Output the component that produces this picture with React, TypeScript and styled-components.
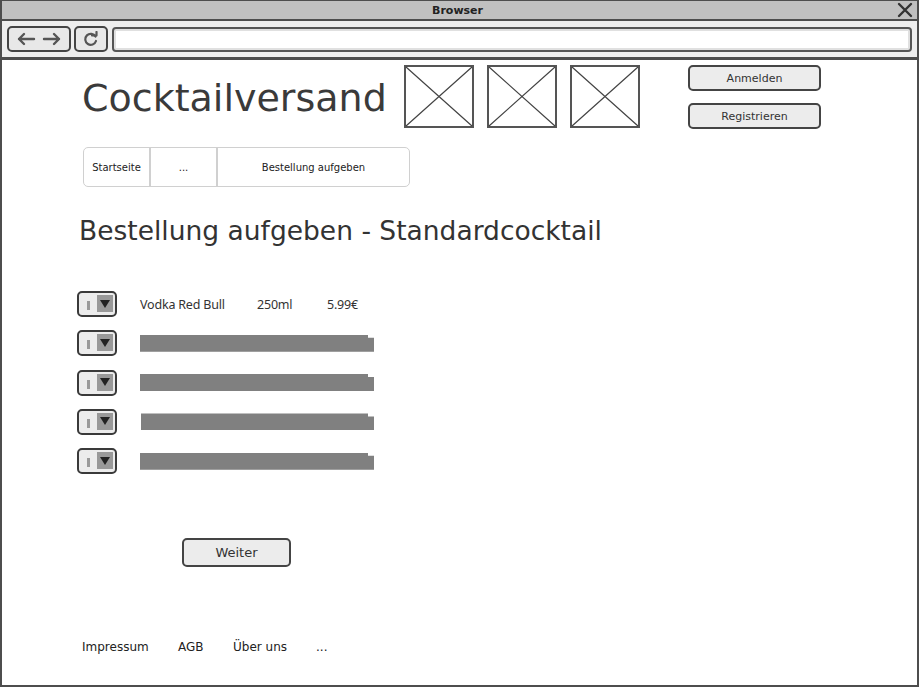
import React from "react";
import styled, { createGlobalStyle } from "styled-components";

const GlobalStyle = createGlobalStyle`
  html, body { margin: 0; padding: 0; background: #fff; }
  body { font-family: "DejaVu Sans", "Noto Sans", sans-serif; color: #333; }
  * { box-sizing: border-box; }
`;

const Window = styled.div`
  width: 919px;
  height: 687px;
  border: 2px solid #4d4d4d;
  border-top-width: 1px;
  display: flex;
  flex-direction: column;
  overflow: hidden;
  background: #fff;
`;

const TitleBar = styled.div`
  height: 20px;
  background: #c0c0c0;
  border-bottom: 2px solid #4d4d4d;
  display: grid;
  grid-template-columns: 1fr auto 1fr;
  align-items: center;
  padding-right: 4px;
`;

const TitleText = styled.div`
  grid-column: 2;
  font-family: "DejaVu Sans", sans-serif;
  font-weight: bold;
  font-size: 11px;
  color: #222;
`;

const CloseBox = styled.div`
  grid-column: 3;
  justify-self: end;
  display: flex;
  align-items: center;
`;

const Toolbar = styled.div`
  height: 39px;
  background: #eeeeee;
  border-bottom: 3px solid #4d4d4d;
  display: flex;
  align-items: center;
  gap: 3px;
  padding: 0 5px 0 5px;
`;

const ToolButton = styled.div<{ $w: number }>`
  width: ${(p) => p.$w}px;
  height: 26px;
  border: 2px solid #444;
  border-radius: 5px;
  background: #e8e8e8;
  display: flex;
  align-items: center;
  justify-content: space-evenly;
  color: #555;
`;

const UrlBar = styled.div`
  flex: 1;
  height: 25px;
  border: 2px solid #555;
  border-radius: 4px;
  background: #fff;
  box-shadow: inset 0 0 0 2px #e0e0e0;
  margin-left: 1px;
`;

const Content = styled.div`
  flex: 1;
  display: flex;
  flex-direction: column;
  padding-top: 4px;
`;

const HeaderRow = styled.div`
  display: flex;
  align-items: flex-start;
  padding-left: 80px;
`;

const SiteTitle = styled.div`
  width: 322px;
  height: 64px;
  padding-top: 4px;
  display: flex;
  align-items: center;
  font-family: "DejaVu Sans", sans-serif;
  font-size: 38px;
  color: #3a3a3a;
`;

const Images = styled.div`
  display: flex;
  gap: 13px;
  margin-top: 1px;
`;

const Placeholder = styled.svg`
  width: 70px;
  height: 63px;
  display: block;
`;

const AuthCol = styled.div`
  display: flex;
  flex-direction: column;
  gap: 12px;
  margin-left: 48px;
  margin-top: 1px;
`;

const SketchButton = styled.div<{ $w: number; $h: number; $fs: number }>`
  width: ${(p) => p.$w}px;
  height: ${(p) => p.$h}px;
  border: 2px solid #444;
  border-radius: 5px;
  background: #ececec;
  display: flex;
  align-items: center;
  justify-content: center;
  font-family: "DejaVu Sans", sans-serif;
  font-size: ${(p) => p.$fs}px;
  color: #333;
`;

const Tabs = styled.div`
  margin: 18px 0 0 81px;
  width: 327px;
  height: 40px;
  border: 1.5px solid #d0d0d0;
  border-radius: 5px;
  display: grid;
  grid-template-columns: 67px 67px 1fr;
`;

const Tab = styled.div<{ $last?: boolean }>`
  display: flex;
  align-items: center;
  justify-content: center;
  font-family: "DejaVu Sans", sans-serif;
  font-size: 10px;
  color: #222;
  border-right: ${(p) => (p.$last ? "none" : "2px solid #d0d0d0")};
`;

const Heading = styled.h1`
  margin: 25px 0 0 77px;
  font-family: "DejaVu Sans", sans-serif;
  font-weight: normal;
  font-size: 26.5px;
  line-height: 38px;
  color: #333;
`;

const List = styled.div`
  margin: 41px 0 0 75px;
  display: flex;
  flex-direction: column;
  gap: 13.3px;
`;

const Row = styled.div`
  display: flex;
  align-items: center;
  height: 26px;
`;

const Dropdown = styled.div`
  width: 40px;
  height: 26px;
  border: 2px solid #3a3a3a;
  border-radius: 5px;
  background: #ececec;
  display: flex;
  align-items: stretch;
  padding: 2px 2px 3px 3px;
`;

const DropLeft = styled.div`
  flex: 1;
  display: flex;
  align-items: flex-end;
  padding: 0 0 2px 5px;
`;

const Caret = styled.div`
  width: 3px;
  height: 9px;
  background: #9a9a9a;
`;

const DropRight = styled.div`
  width: 16px;
  background: #999;
  display: flex;
  align-items: center;
  justify-content: center;
`;

const Triangle = styled.div`
  width: 0;
  height: 0;
  border-left: 5px solid transparent;
  border-right: 5px solid transparent;
  border-top: 8px solid #222;
`;

const Cell = styled.span<{ $w: number }>`
  width: ${(p) => p.$w}px;
  font-family: "Noto Sans", sans-serif;
  font-size: 12.5px;
  color: #333;
  letter-spacing: -0.2px;
`;

const Cells = styled.div`
  display: flex;
  margin-left: 23px;
`;

const Bar = styled.div<{ $offset: number }>`
  margin-left: ${(p) => 23 + p.$offset}px;
  width: ${(p) => 234 - p.$offset}px;
  height: 17px;
  background: #808080;
  clip-path: polygon(0 0, calc(100% - 6px) 0, calc(100% - 6px) 3px, 100% 3px, 100% 100%, 0 100%);
`;

const WeiterWrap = styled.div`
  margin: 64px 0 0 180px;
`;

const Footer = styled.div`
  margin: 73px 0 0 80px;
  display: grid;
  grid-template-columns: 96px 55px 83px auto;
  font-family: "DejaVu Sans", sans-serif;
  font-size: 12px;
  color: #222;
`;

const Arrow = ({ dir }: { dir: "l" | "r" }) => (
  <svg width="20" height="14" viewBox="0 0 20 14">
    {dir === "l" ? (
      <path d="M18 7H3M8 2L3 7l5 5" fill="none" stroke="#555" strokeWidth="2.4" strokeLinecap="round" strokeLinejoin="round" />
    ) : (
      <path d="M2 7h15M12 2l5 5-5 5" fill="none" stroke="#555" strokeWidth="2.4" strokeLinecap="round" strokeLinejoin="round" />
    )}
  </svg>
);

const Refresh = () => (
  <svg width="16" height="16" viewBox="0 0 16 16">
    <path d="M12.5 5.5A5.5 5.5 0 1 0 13 10" fill="none" stroke="#555" strokeWidth="2.2" strokeLinecap="round" />
    <path d="M9 4.5h4.5V1" fill="none" stroke="#555" strokeWidth="2.2" strokeLinecap="round" strokeLinejoin="round" />
  </svg>
);

const ImgBox = () => (
  <Placeholder viewBox="0 0 70 63">
    <rect x="1" y="1" width="68" height="61" fill="#fff" stroke="#555" strokeWidth="2" />
    <path d="M2 2L68 61M68 2L2 61" stroke="#444" strokeWidth="1.2" />
  </Placeholder>
);

const DropBox = () => (
  <Dropdown>
    <DropLeft>
      <Caret />
    </DropLeft>
    <DropRight>
      <Triangle />
    </DropRight>
  </Dropdown>
);

const barOffsets = [0, 0, 1, 0];

export default function App() {
  return (
    <>
      <GlobalStyle />
      <Window>
        <TitleBar>
          <TitleText>Browser</TitleText>
          <CloseBox>
            <svg width="16" height="16" viewBox="0 0 16 16">
              <path d="M2 2L14 14M14 2L2 14" stroke="#333" strokeWidth="2.4" strokeLinecap="round" />
            </svg>
          </CloseBox>
        </TitleBar>
        <Toolbar>
          <ToolButton $w={64}>
            <Arrow dir="l" />
            <Arrow dir="r" />
          </ToolButton>
          <ToolButton $w={34}>
            <Refresh />
          </ToolButton>
          <UrlBar />
        </Toolbar>
        <Content>
          <HeaderRow>
            <SiteTitle>Cocktailversand</SiteTitle>
            <Images>
              <ImgBox />
              <ImgBox />
              <ImgBox />
            </Images>
            <AuthCol>
              <SketchButton $w={133} $h={26} $fs={11}>Anmelden</SketchButton>
              <SketchButton $w={133} $h={26} $fs={11}>Registrieren</SketchButton>
            </AuthCol>
          </HeaderRow>
          <Tabs>
            <Tab>Startseite</Tab>
            <Tab>...</Tab>
            <Tab $last>Bestellung aufgeben</Tab>
          </Tabs>
          <Heading>Bestellung aufgeben - Standardcocktail</Heading>
          <List>
            <Row>
              <DropBox />
              <Cells>
                <Cell $w={117}>Vodka Red Bull</Cell>
                <Cell $w={70}>250ml</Cell>
                <Cell $w={50}>5.99€</Cell>
              </Cells>
            </Row>
            {barOffsets.map((o, i) => (
              <Row key={i}>
                <DropBox />
                <Bar $offset={o} />
              </Row>
            ))}
          </List>
          <WeiterWrap>
            <SketchButton $w={109} $h={29} $fs={13}>Weiter</SketchButton>
          </WeiterWrap>
          <Footer>
            <span>Impressum</span>
            <span>AGB</span>
            <span>Über uns</span>
            <span>...</span>
          </Footer>
        </Content>
      </Window>
    </>
  );
}
